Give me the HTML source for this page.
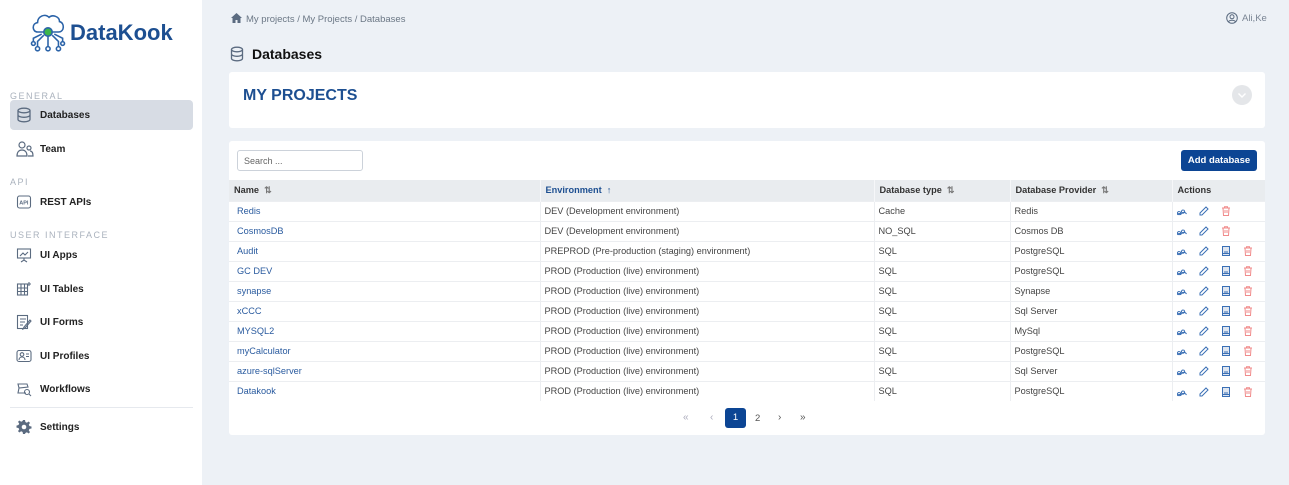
<!DOCTYPE html>
<html><head><meta charset="utf-8"><style>
*{box-sizing:border-box;margin:0;padding:0}
body{width:1289px;height:485px;overflow:hidden;background:#edf1f6;font-family:"Liberation Sans",sans-serif;position:relative}
.side{position:absolute;left:0;top:0;width:202px;height:485px;background:#fff}
.abs{position:absolute}
.sec{position:absolute;left:10px;font-size:9px;letter-spacing:1.5px;color:#aab2bd}
.item{position:absolute;left:10px;width:183px;height:30px;border-radius:4px;font-size:10px;font-weight:bold;color:#222;display:flex;align-items:center;padding-left:30px}
.item svg{position:absolute;left:6px;top:7px}
.act{background:#d7dce4}
.card{position:absolute;left:229px;width:1036px;background:#fff;border-radius:3px}
table{border-collapse:collapse;position:absolute;left:0;top:39px;width:1036px;font-size:9.2px;table-layout:fixed}
th{background:#e9ecef;height:21px;text-align:left;padding-left:5px;color:#333;font-weight:bold;border-right:1px solid #f6f7f9;white-space:nowrap}
td{height:20px;padding:0 0 0 4px;color:#444;border-top:1px solid #eceef1;border-right:1px solid #eceef1;white-space:nowrap;overflow:hidden}
td:first-child{color:#2a5b9f;padding-left:8px}
td:last-child,th:last-child{border-right:none}
.ic{display:inline-block;width:22px;vertical-align:middle;line-height:0}
</style></head><body>
<div class="side">
 <svg class="abs" style="left:29px;top:9px" width="38" height="46" viewBox="0 0 36 44" fill="none" stroke="#2b63a8" stroke-width="1.5"><path d="M8 22c-5 0-6-8 0-9 0-6 7-9 11-5 3-3 10-1 10 4 5 1 5 10-1 10z"/><circle cx="18" cy="22" r="4" fill="#3cb54a" stroke="#2b63a8"/><path d="M18 26v10M14 25l-6 6v5M22 25l6 6v5M12 24l-8 4v4M24 24l8 4v4"/><circle cx="18" cy="38" r="2"/><circle cx="8" cy="38" r="2"/><circle cx="28" cy="38" r="2"/><circle cx="4" cy="33" r="1.8"/><circle cx="32" cy="33" r="1.8"/></svg>
 <div class="abs" style="left:70px;top:20px;font-size:22px;font-weight:bold;color:#1d4f91">DataKook</div>
 <div class="sec" style="top:91px">GENERAL</div>
 <div class="item act" style="top:100px"><svg width="16" height="16" viewBox="0 0 16 16" fill="none" stroke="#5b6b80" stroke-width="1.3"><ellipse cx="8" cy="3.5" rx="6" ry="2.3"/><path d="M2 3.5v9c0 1.3 2.7 2.3 6 2.3s6-1 6-2.3v-9M2 8c0 1.3 2.7 2.3 6 2.3s6-1 6-2.3"/></svg>Databases</div>
 <div class="item" style="top:134px"><svg width="18" height="16" viewBox="0 0 18 16" fill="none" stroke="#5b6b80" stroke-width="1.2"><circle cx="6" cy="4" r="3"/><path d="M1 15c0-4 2-6 5-6s5 2 5 6z"/><circle cx="13" cy="7" r="2"/><path d="M12 15h5c0-3-1-5-3-5"/></svg>Team</div>
 <div class="sec" style="top:177px">API</div>
 <div class="item" style="top:187px"><svg width="16" height="16" viewBox="0 0 16 16" fill="none" stroke="#5b6b80" stroke-width="1.1"><rect x="1.5" y="2" width="13" height="12" rx="2"/><text x="3.3" y="10.5" font-size="5.5" fill="#5b6b80" stroke="none" font-family="Liberation Sans">API</text></svg>REST APIs</div>
 <div class="sec" style="top:230px">USER INTERFACE</div>
 <div class="item" style="top:240px"><svg width="16" height="16" viewBox="0 0 16 16" fill="none" stroke="#5b6b80" stroke-width="1.1"><rect x="1.5" y="2" width="13" height="9"/><path d="M4 9l3-3 2 2 3-3M8 11v2M5 15l3-2 3 2"/></svg>UI Apps</div>
 <div class="item" style="top:274px"><svg width="16" height="16" viewBox="0 0 16 16" fill="none" stroke="#5b6b80" stroke-width="1.1"><rect x="1.5" y="3" width="10" height="11"/><path d="M1.5 7h10M1.5 10.5h10M5 3v11M8.5 3v11M13 1v4M11 3h4"/></svg>UI Tables</div>
 <div class="item" style="top:307px"><svg width="16" height="16" viewBox="0 0 16 16" fill="none" stroke="#5b6b80" stroke-width="1.1"><rect x="1.5" y="1.5" width="10" height="13"/><path d="M4 5h6M4 8h5M4 11h3M14 6l-6 7-1 2 2-1 6-7z"/></svg>UI Forms</div>
 <div class="item" style="top:341px"><svg width="16" height="16" viewBox="0 0 16 16" fill="none" stroke="#5b6b80" stroke-width="1.1"><rect x="1" y="2.5" width="14" height="11" rx="2"/><circle cx="6" cy="6.5" r="1.8"/><path d="M3 12c0-2 1.5-3 3-3s3 1 3 3M10 6h3M10 8.5h3"/></svg>UI Profiles</div>
 <div class="item" style="top:374px"><svg width="16" height="16" viewBox="0 0 16 16" fill="none" stroke="#5b6b80" stroke-width="1.1"><path d="M2 3h9l1 3-9 1zM3 7l-1 5 8 0"/><circle cx="11" cy="11" r="2.5"/><path d="M13 13l2 2"/></svg>Workflows</div>
 <div class="abs" style="left:10px;top:407px;width:183px;height:1px;background:#e6e9ee"></div>
 <div class="item" style="top:412px"><svg width="16" height="16" viewBox="0 0 16 16"><path fill="#5b6b80" d="M7 1h2l.4 2 1.5.7 1.7-1.2 1.4 1.4-1.2 1.7.7 1.5 2 .4v2l-2 .4-.7 1.5 1.2 1.7-1.4 1.4-1.7-1.2-1.5.7L9 15H7l-.4-2-1.5-.7-1.7 1.2-1.4-1.4 1.2-1.7L2.5 9 .5 8.6v-2L2.5 6l.7-1.5L2 2.9l1.4-1.4 1.7 1.2L6.6 2z"/><circle cx="8" cy="8" r="2.3" fill="#fff"/></svg>Settings</div>
</div>
<svg class="abs" style="left:231px;top:13px" width="11" height="10" viewBox="0 0 11 10"><path fill="#5b6b80" d="M5.5 0L0 5h1.5v5h3V7h2v3h3V5H11z"/></svg>
<div class="abs" style="left:246px;top:14px;font-size:9.5px;color:#6b7785">My projects / My Projects / Databases</div>
<svg class="abs" style="left:1226px;top:12px" width="12" height="12" viewBox="0 0 12 12" fill="none" stroke="#5b6b80" stroke-width="1"><circle cx="6" cy="6" r="5.3"/><circle cx="6" cy="4.8" r="2"/><path d="M2.5 9.8c1-2 6-2 7 0"/></svg>
<div class="abs" style="left:1242px;top:13px;font-size:9.5px;color:#7a8594">Ali,Ke</div>
<svg class="abs" style="left:230px;top:46px" width="14" height="16" viewBox="0 0 14 16" fill="none" stroke="#5b6b80" stroke-width="1.3"><ellipse cx="7" cy="3.5" rx="5.5" ry="2.3"/><path d="M1.5 3.5v9c0 1.3 2.5 2.3 5.5 2.3s5.5-1 5.5-2.3v-9M1.5 8c0 1.3 2.5 2.3 5.5 2.3S12.5 9.3 12.5 8"/></svg>
<div class="abs" style="left:252px;top:46px;font-size:14px;font-weight:bold;color:#111">Databases</div>
<div class="card" style="top:72px;height:56px">
 <div class="abs" style="left:14px;top:15px;font-size:16px;font-weight:bold;color:#1d4f91">MY PROJECTS</div>
 <div class="abs" style="left:1003px;top:13px;width:20px;height:20px;border-radius:50%;background:#e4e6e9"><svg width="20" height="20"><path d="M6.5 8.5l3.5 3.5 3.5-3.5" stroke="#fff" stroke-width="1.4" fill="none"/></svg></div>
</div>
<div class="card" style="top:141px;height:294px">
 <div class="abs" style="left:8px;top:9px;width:126px;height:21px;border:1px solid #ccd2da;border-radius:3px;font-size:9px;color:#666;padding:5px 6px">Search ...</div>
 <div class="abs" style="left:952px;top:9px;width:76px;height:21px;border-radius:3px;background:#0c4594;color:#fff;font-size:9.5px;font-weight:bold;text-align:center;line-height:21px">Add database</div>
 <table>
  <colgroup><col style="width:311px"><col style="width:334px"><col style="width:136px"><col style="width:162px"><col style="width:93px"></colgroup>
  <tr><th>Name &nbsp;<span style="color:#777">⇅</span></th><th style="color:#1d4f91">Environment &nbsp;<span>↑</span></th><th>Database type &nbsp;<span style="color:#777">⇅</span></th><th>Database Provider &nbsp;<span style="color:#777">⇅</span></th><th>Actions</th></tr>
  <tr><td>Redis</td><td>DEV (Development environment)</td><td>Cache</td><td>Redis</td><td>A</td></tr>
  <tr><td>CosmosDB</td><td>DEV (Development environment)</td><td>NO_SQL</td><td>Cosmos DB</td><td>A</td></tr>
  <tr><td>Audit</td><td>PREPROD (Pre-production (staging) environment)</td><td>SQL</td><td>PostgreSQL</td><td>B</td></tr>
  <tr><td>GC DEV</td><td>PROD (Production (live) environment)</td><td>SQL</td><td>PostgreSQL</td><td>B</td></tr>
  <tr><td>synapse</td><td>PROD (Production (live) environment)</td><td>SQL</td><td>Synapse</td><td>B</td></tr>
  <tr><td>xCCC</td><td>PROD (Production (live) environment)</td><td>SQL</td><td>Sql Server</td><td>B</td></tr>
  <tr><td>MYSQL2</td><td>PROD (Production (live) environment)</td><td>SQL</td><td>MySql</td><td>B</td></tr>
  <tr><td>myCalculator</td><td>PROD (Production (live) environment)</td><td>SQL</td><td>PostgreSQL</td><td>B</td></tr>
  <tr><td>azure-sqlServer</td><td>PROD (Production (live) environment)</td><td>SQL</td><td>Sql Server</td><td>B</td></tr>
  <tr><td>Datakook</td><td>PROD (Production (live) environment)</td><td>SQL</td><td>PostgreSQL</td><td>B</td></tr>
 </table>
 <div class="abs" style="left:454px;top:271px;font-size:10px;color:#aab">«</div>
 <div class="abs" style="left:481px;top:271px;font-size:10px;color:#aab">‹</div>
 <div class="abs" style="left:496px;top:267px;width:21px;height:20px;border-radius:3px;background:#0c4594;color:#fff;font-size:9.5px;text-align:center;line-height:20px">1</div>
 <div class="abs" style="left:526px;top:272px;font-size:9.5px;color:#555">2</div>
 <div class="abs" style="left:549px;top:271px;font-size:10px;color:#555">›</div>
 <div class="abs" style="left:571px;top:271px;font-size:10px;color:#555">»</div>
</div>
<script>
var pe='<svg width="10" height="10" viewBox="0 0 10 10" fill="none" stroke="#3a6fb5" stroke-width="1"><path d="M2 5.5a1.6 1.6 0 1 0 .1 0M6 4a1.6 1.6 0 1 0 .1 0M0.5 9c.5-2 3-2 3.5 0M4.5 8c.5-2 3.5-2.5 5 0"/></svg>';
var ed='<svg width="10" height="10" viewBox="0 0 10 10" fill="none" stroke="#3a6fb5" stroke-width="1"><path d="M7 1l2 2-6 6H1V7z"/></svg>';
var bk='<svg width="10" height="10" viewBox="0 0 10 10" fill="#dfe6f0" stroke="#3a6fb5" stroke-width="1"><rect x="1.5" y="0.5" width="7" height="9"/><path d="M3 6h4M1.5 7.5h7"/></svg>';
var tr='<svg width="10" height="10" viewBox="0 0 10 10" fill="none" stroke="#f08a8a" stroke-width="1"><path d="M1 2h8M3.5 2V.8h3V2M2 2l.5 7.5h5L8 2M4 4v3M6 4v3"/></svg>';
document.querySelectorAll('td:last-child').forEach(function(t){var b=t.textContent=='B';t.innerHTML='<span class="ic">'+pe+'</span><span class="ic">'+ed+'</span>'+(b?'<span class="ic">'+bk+'</span>':'')+'<span class="ic">'+tr+'</span>';t.style.paddingLeft='4px'});
</script>
</body></html>
